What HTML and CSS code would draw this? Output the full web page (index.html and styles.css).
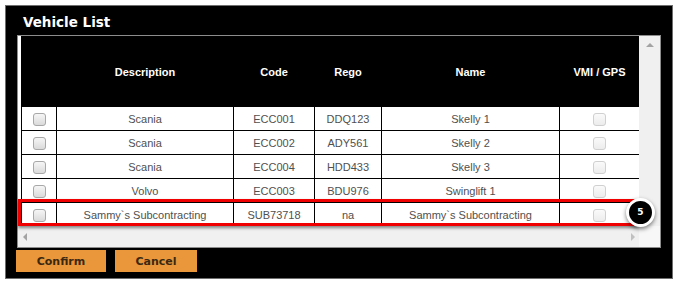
FILE: index.html
```html
<!DOCTYPE html>
<html lang="en">

<head>
  <meta charset="UTF-8" />
  <title>Vehicle List</title>
  <link rel="stylesheet" href="styles.css">
</head>

<body>
  <div class="window">
    <h1 class="window-title">Vehicle List</h1>

    <div class="panel">
      <div class="panel-body">
        <table class="vehicles">
          <colgroup>
            <col class="col-check">
            <col class="col-desc">
            <col class="col-code">
            <col class="col-rego">
            <col class="col-name">
            <col class="col-gps">
          </colgroup>
          <thead>
            <tr>
              <th></th>
              <th>Description</th>
              <th>Code</th>
              <th>Rego</th>
              <th>Name</th>
              <th>VMI / GPS</th>
            </tr>
          </thead>
          <tbody>
            <tr>
              <td><span class="check"></span></td>
              <td>Scania</td>
              <td>ECC001</td>
              <td>DDQ123</td>
              <td>Skelly 1</td>
              <td><span class="check disabled"></span></td>
            </tr>
            <tr>
              <td><span class="check"></span></td>
              <td>Scania</td>
              <td>ECC002</td>
              <td>ADY561</td>
              <td>Skelly 2</td>
              <td><span class="check disabled"></span></td>
            </tr>
            <tr>
              <td><span class="check"></span></td>
              <td>Scania</td>
              <td>ECC004</td>
              <td>HDD433</td>
              <td>Skelly 3</td>
              <td><span class="check disabled"></span></td>
            </tr>
            <tr>
              <td><span class="check"></span></td>
              <td>Volvo</td>
              <td>ECC003</td>
              <td>BDU976</td>
              <td>Swinglift 1</td>
              <td><span class="check disabled"></span></td>
            </tr>
            <tr>
              <td><span class="check"></span></td>
              <td>Sammy`s Subcontracting</td>
              <td>SUB73718</td>
              <td>na</td>
              <td>Sammy`s Subcontracting</td>
              <td><span class="check disabled"></span></td>
            </tr>
          </tbody>
        </table>
      </div>
      <div class="vscroll"><span class="arrow arrow-up"></span></div>
      <div class="hscroll">
        <span class="arrow arrow-left"></span>
        <span class="arrow arrow-right"></span>
      </div>
      <div class="corner"></div>

      <!-- callout over the last row -->
      <div class="highlight"></div>
      <div class="badge">5</div>
    </div>

    <div class="actions">
      <button class="btn btn-confirm">Confirm</button>
      <button class="btn btn-cancel">Cancel</button>
    </div>
  </div>
</body>

</html>
```

FILE: styles.css
```css
* {
  box-sizing: border-box;
}

body {
  margin: 0;
  background-color: #fff;
  font-family: "Liberation Sans", Arial, sans-serif;
}

.window {
  margin: 5px 0 0 5px;
  width: 668px;
  height: 274px;
  border: 1px solid #6e6e6e;
  background-color: #000;
}

.window-title {
  margin: 0;
  height: 29px;
  padding: 4px 0 0 17px;
  line-height: 25px;
  font-family: "DejaVu Sans", Verdana, sans-serif;
  font-size: 13.5px;
  font-weight: 700;
  color: #fff;
}

.panel {
  position: relative;
  margin-left: 11px;
  width: 644px;
  border: 1px solid #8c8c8c;
  background-color: #fff;
  display: grid;
  grid-template-columns: 621px 21px;
  grid-template-rows: 190px 21px;
}

.panel-body {
  padding-left: 3px;
  overflow: hidden;
}

table.vehicles {
  width: 618px;
  border-collapse: collapse;
  table-layout: fixed;
  font-size: 11px;
}

.col-check { width: 35px; }
.col-desc { width: 177px; }
.col-code { width: 81px; }
.col-rego { width: 67px; }
.col-name { width: 178px; }
.col-gps { width: 80px; }

table.vehicles th {
  height: 70px;
  padding: 0;
  background-color: #000;
  color: #fff;
  font-weight: 700;
  text-align: center;
  border: 1px solid #000;
}

table.vehicles td {
  height: 24px;
  padding: 0;
  border: 1px solid #000;
  color: #505050;
  text-align: center;
  vertical-align: middle;
}

.check {
  display: inline-block;
  width: 13px;
  height: 13px;
  margin-top: 3px;
  border: 1px solid #a8a8a8;
  border-radius: 3px;
  background: linear-gradient(#f6f6f6, #dadada);
}

.check.disabled {
  border-color: #d0d0d0;
  background: linear-gradient(#fafafa, #ececec);
}

.vscroll,
.hscroll,
.corner {
  background-color: #f0f0f0;
  position: relative;
}

.corner {
  background-color: #f7f7f7;
}

.arrow {
  position: absolute;
  width: 0;
  height: 0;
}

.arrow-up {
  top: 7px;
  left: 7px;
  border-left: 4px solid transparent;
  border-right: 4px solid transparent;
  border-bottom: 4px solid #a3a3a3;
}

.arrow-left {
  top: 7px;
  left: 5px;
  border-top: 4px solid transparent;
  border-bottom: 4px solid transparent;
  border-right: 4px solid #a3a3a3;
}

.arrow-right {
  top: 7px;
  right: 4px;
  border-top: 4px solid transparent;
  border-bottom: 4px solid transparent;
  border-left: 4px solid #c0c0c0;
}

.highlight {
  position: absolute;
  left: 0;
  top: 163px;
  width: 620px;
  height: 27px;
  border: 3px solid #f00000;
  box-shadow: 0 2px 3px rgba(0, 0, 0, 0.45);
}

.badge {
  position: absolute;
  left: 608px;
  top: 162px;
  width: 29px;
  height: 29px;
  border: 3px solid #fff;
  border-radius: 50%;
  background-color: #000;
  color: #fff;
  font-family: "DejaVu Sans", Verdana, sans-serif;
  font-size: 9px;
  font-weight: 700;
  line-height: 23px;
  text-align: center;
  box-shadow: 0 2px 4px rgba(0, 0, 0, 0.5);
}

.actions {
  display: flex;
  gap: 9px;
  margin: 2px 0 0 10px;
}

.btn {
  height: 22px;
  padding: 0;
  border: none;
  background-color: #ea963a;
  color: #3a2812;
  font-family: "DejaVu Sans", Verdana, sans-serif;
  font-size: 11px;
  font-weight: 700;
  cursor: pointer;
}

.btn-confirm {
  width: 90px;
}

.btn-cancel {
  width: 82px;
}
```
